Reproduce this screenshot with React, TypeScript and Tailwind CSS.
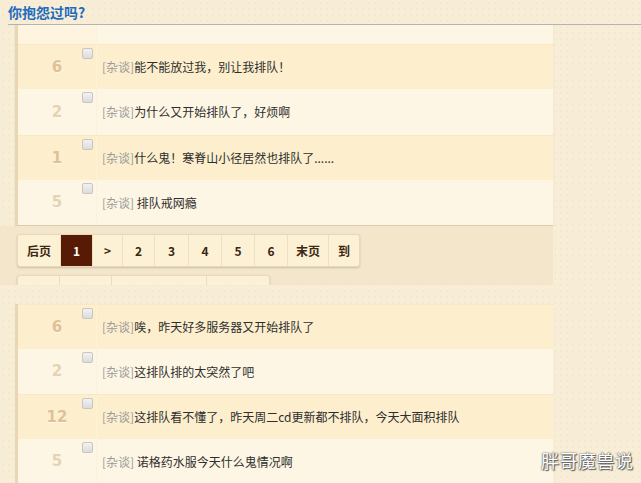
import React from 'react';

interface Topic {
  n: string;
  t: string;
  dark?: boolean;
}

const first: Topic[] = [
  { n: '6', t: '能不能放过我，别让我排队！', dark: true },
  { n: '2', t: '为什么又开始排队了，好烦啊' },
  { n: '1', t: '什么鬼！寒脊山小径居然也排队了......', dark: true },
  { n: '5', t: ' 排队戒网瘾' },
];

const second: Topic[] = [
  { n: '6', t: '唉，昨天好多服务器又开始排队了', dark: true },
  { n: '2', t: '这排队排的太突然了吧' },
  { n: '12', t: '这排队看不懂了，昨天周二cd更新都不排队，今天大面积排队', dark: true },
  { n: '5', t: ' 诺格药水服今天什么鬼情况啊' },
];

const pages = [
  { label: '后页', w: 'w-[43px]' },
  { label: '1', w: 'w-[32px]', active: true },
  { label: '>', w: 'w-[30px]' },
  { label: '2', w: 'w-[32px]' },
  { label: '3', w: 'w-[34px]' },
  { label: '4', w: 'w-[33px]' },
  { label: '5', w: 'w-[33px]' },
  { label: '6', w: 'w-[33px]' },
  { label: '末页', w: 'w-[41px]' },
  { label: '到', w: 'w-[30px]' },
];

function Row({ topic, h }: { topic: Topic; h: string }) {
  return (
    <div
      className={`flex ${h} ${
        topic.dark ? 'bg-[#fdefcd] border-t border-dotted border-[#f6e2b8]' : 'bg-[#fef6e4]'
      }`}
    >
      {/* number + checkbox */}
      <div className="relative w-[78px] flex items-center justify-center">
        <span
          className={`font-['DejaVu_Sans',sans-serif] font-bold text-[15px] ${
            topic.dark ? 'text-[#e0c197]' : 'text-[#e4d4b4]'
          } [text-shadow:0_1px_0_#fff8ea]`}
        >
          {topic.n}
        </span>
        <span className="absolute left-[64px] top-[3px] w-[11px] h-[11px] rounded-[2px] border border-[#c9c6bf] bg-gradient-to-b from-[#f2f2f2] to-[#dcdcdc]" />
      </div>
      <div className="flex-1 flex items-center pl-[5px] border-l border-[#fcf2d9] text-[12px] font-['Noto_Sans_CJK_SC',sans-serif] whitespace-pre">
        <span className="text-[#9a9a9a]">[杂谈]</span>
        <span className="text-[#2e2e2e]">{topic.t}</span>
      </div>
    </div>
  );
}

export default function App() {
  return (
    <div className="relative w-[641px] h-[483px] overflow-hidden bg-[#f8eed8] bg-[radial-gradient(circle,#f3e7cc_0.6px,transparent_1px)] [background-size:6px_6px] font-['Noto_Sans_CJK_SC',sans-serif]">
      {/* title */}
      <div className="ml-[8px] h-[25px] border-b border-[#b1b3b4]">
        <h1 className="text-[14px] leading-[24px] font-bold text-[#236bbd]">你抱怨过吗?</h1>
      </div>

      {/* first list */}
      <div className="ml-[15px] w-[538px] border-l-[3px] border-[#e9d7b3] border-b border-b-[#d8ccb4] shadow-[0_1px_1px_rgba(150,130,100,0.25)]">
        <div className="h-[19px] flex bg-[#fef6e4]">
          <div className="w-[78px] bg-[#fef4df]" />
          <div className="flex-1 border-l border-[#fcf2d9]" />
        </div>
        <Row topic={first[0]} h="h-[45px]" />
        <Row topic={first[1]} h="h-[46px]" />
        <Row topic={first[2]} h="h-[45px]" />
        <Row topic={first[3]} h="h-[45px]" />
      </div>

      {/* pagination */}
      <div className="w-[553px] h-[59px] overflow-hidden bg-[#f4e6ca] pl-[17px] pt-[8px]">
        <div className="flex w-fit h-[33px] rounded-[3px] border border-[#e6d9bf] bg-[#fdf1d5] shadow-[0_1px_2px_rgba(120,100,70,0.3)] overflow-hidden">
          {pages.map(p => (
            <div
              key={p.label}
              className={`${p.w} flex items-center justify-center text-[12px] font-bold border-r border-[#efdfc0] last:border-r-0 ${
                p.active ? 'bg-[#571a05] text-white' : 'text-[#3b2713]'
              }`}
            >
              {p.label}
            </div>
          ))}
        </div>
        <div className="mt-[8px] flex w-[253px] h-[30px] rounded-[3px] border border-[#e6d9bf] bg-[#fdf1d5] shadow-[0_1px_2px_rgba(120,100,70,0.3)]">
          <div className="w-[42px] border-r border-[#e9dcc2]" />
          <div className="w-[52px] border-r border-[#e9dcc2]" />
          <div className="w-[95px] border-r border-[#e9dcc2]" />
          <div className="flex-1" />
        </div>
      </div>

      {/* second list */}
      <div className="mt-[19px] ml-[15px] w-[538px] border-l-[3px] border-[#e9d7b3]">
        {second.map(t => (
          <Row key={t.t} topic={t} h="h-[45px]" />
        ))}
      </div>

      {/* watermark */}
      <div className="absolute left-[541px] top-[450px] text-[18px] leading-[20px] text-white tracking-[0.5px] [text-shadow:0_0_1px_#444,0_0_2px_#777,1px_1px_1px_#555]">
        胖哥魔兽说
      </div>
    </div>
  );
}
